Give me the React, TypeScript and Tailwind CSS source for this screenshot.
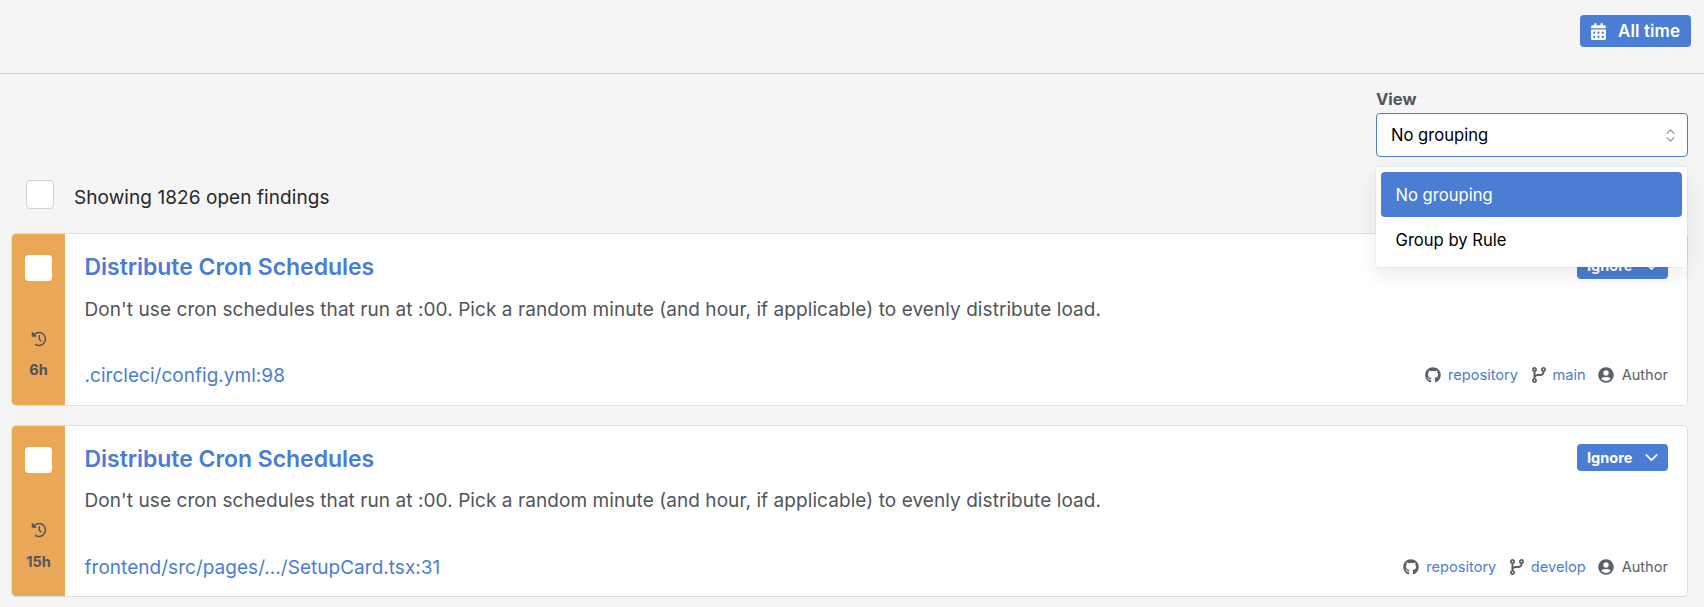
import { FaCalendarDays, FaCodeBranch, FaGithub } from "react-icons/fa6";
import { FaUserCircle } from "react-icons/fa";
import { ChevronDown, ChevronsUpDown } from "lucide-react";

type Finding = { age: string; path: string; branch: string };

const findings: Finding[] = [
  { age: "6h", path: ".circleci/config.yml:98", branch: "main" },
  { age: "15h", path: "frontend/src/pages/.../SetupCard.tsx:31", branch: "develop" },
];

function HistoryIcon({ className }: { className?: string }) {
  return (
    <svg className={className} viewBox="0 0 16 16" fill="none" stroke="currentColor" strokeLinecap="round" strokeLinejoin="round">
      <path d="M2.4 4.6A6.5 6.5 0 1 1 4.6 13.6" strokeWidth="1.5" />
      <path d="M1.2 1.6V5.2H4.9Z" fill="currentColor" strokeWidth="0.9" />
      <path d="M8.3 4.8V8.2L10 10" strokeWidth="1.4" />
    </svg>
  );
}

function FindingCard({ age, path, branch }: Finding) {
  return (
    <article className="flex h-[172.5px] overflow-hidden rounded-[5px] border border-[#dcdee2] bg-white">
      <div className="flex w-[53px] shrink-0 flex-col items-center bg-[#eaa757] text-[#4f555c]">
        <span className="mt-[20.9px] h-[26px] w-[27px] shrink-0 rounded-[4px] bg-white" />
        <HistoryIcon className="mt-[49.7px] size-4" />
        <span className="mt-[13.3px] text-[14.5px] leading-5 font-bold">{age}</span>
      </div>
      <div className="flex min-w-0 flex-1 flex-col pr-[19px] pl-[19.5px]">
        <div className="mt-[17px] flex h-[32px] items-start justify-between">
          <h2 className="text-[23px] leading-[32px] font-semibold tracking-[-0.04px] text-[#4a7dd3]">Distribute Cron Schedules</h2>
          <button className="mt-[1px] flex h-[27px] w-[91px] items-center justify-between rounded-[4px] bg-[#4a7dd3] pr-[6px] pl-[10px] text-[14.5px] font-bold text-white">
            <span className="pt-px">Ignore</span>
            <ChevronDown className="mt-px size-[21px]" strokeWidth={2} />
          </button>
        </div>
        <p className="mt-[12.6px] text-[19px] leading-7 tracking-[0.07px] text-[#50555c]">
          Don't use cron schedules that run at :00. Pick a random minute (and hour, if applicable) to evenly distribute load.
        </p>
        <div className="mt-[38.4px] -mb-px flex items-center justify-between">
          <a className="text-[19px] leading-7 tracking-[0.03px] text-[#4a7dd3]">{path}</a>
          <div className="-mt-[2px] flex items-center text-[14.6px] leading-5 text-[#5c6067]">
            <FaGithub className="mr-[7px] size-4" />
            <span className="mr-[13px] text-[#4a7dd3]">repository</span>
            <FaCodeBranch className="mr-[5.5px] size-4" />
            <span className="mr-[12.5px] text-[#4a7dd3]">{branch}</span>
            <FaUserCircle className="mr-[7.5px] size-4" />
            <span>Author</span>
          </div>
        </div>
      </div>
    </article>
  );
}

export default function App() {
  return (
    <div className="h-[607px] overflow-hidden bg-[#f5f5f5] font-['Inter',sans-serif]">
      <header className="flex h-[74px] justify-end border-b border-[#cfd0d8] pt-[15px] pr-[13px]">
        <button className="flex h-8 w-[111px] items-center rounded-[4px] bg-[#4a7dd3] pl-[10px] text-[17px] font-semibold text-white">
          <FaCalendarDays className="mr-[11px] size-[17px]" />
          <span className="pt-[2px] tracking-[0.1px]">All time</span>
        </button>
      </header>
      <main className="pr-[16px] pl-[11px]">
        <div className="flex h-[159px] justify-between">
          <div className="flex items-end pb-[24px] pl-[15px]">
            <span className="h-[29px] w-7 rounded-[4px] border border-[#cfd2db] bg-white" />
            <span className="-mb-px ml-5 text-[19px] leading-6 tracking-[0.07px] text-[#26282c]">Showing 1826 open findings</span>
          </div>
          <div className="relative w-[312px] pt-[13px]">
            <div className="mb-px text-[16.5px] leading-[25px] font-bold text-[#50555c]">View</div>
            <div className="flex h-[44px] items-center justify-between rounded-[4px] border border-[#4a7dd3] bg-white pr-[8px] pl-[14px] text-[16.6px] text-black">
              <span className="pt-px">No grouping</span>
              <ChevronsUpDown className="size-[17px] text-[#868e96]" strokeWidth={1.6} />
            </div>
            <div className="absolute top-[93px] left-0 z-10 h-[100px] w-[311px] rounded-[4px] bg-white p-[5px] text-[16.6px] text-black shadow-[0_0_0_1px_rgba(0,0,0,0.04),0_8px_20px_rgba(0,0,0,0.08)]">
              <div className="flex h-[45px] items-center rounded-[4px] bg-[#4a7dd3] pt-[2px] pl-[14.5px] text-white">No grouping</div>
              <div className="flex h-[45px] items-center pt-[2px] pl-[14.5px]">Group by Rule</div>
            </div>
          </div>
        </div>
        <div className="flex flex-col gap-[19.2px]">
          {findings.map((f) => (
            <FindingCard key={f.age} {...f} />
          ))}
        </div>
      </main>
    </div>
  );
}
